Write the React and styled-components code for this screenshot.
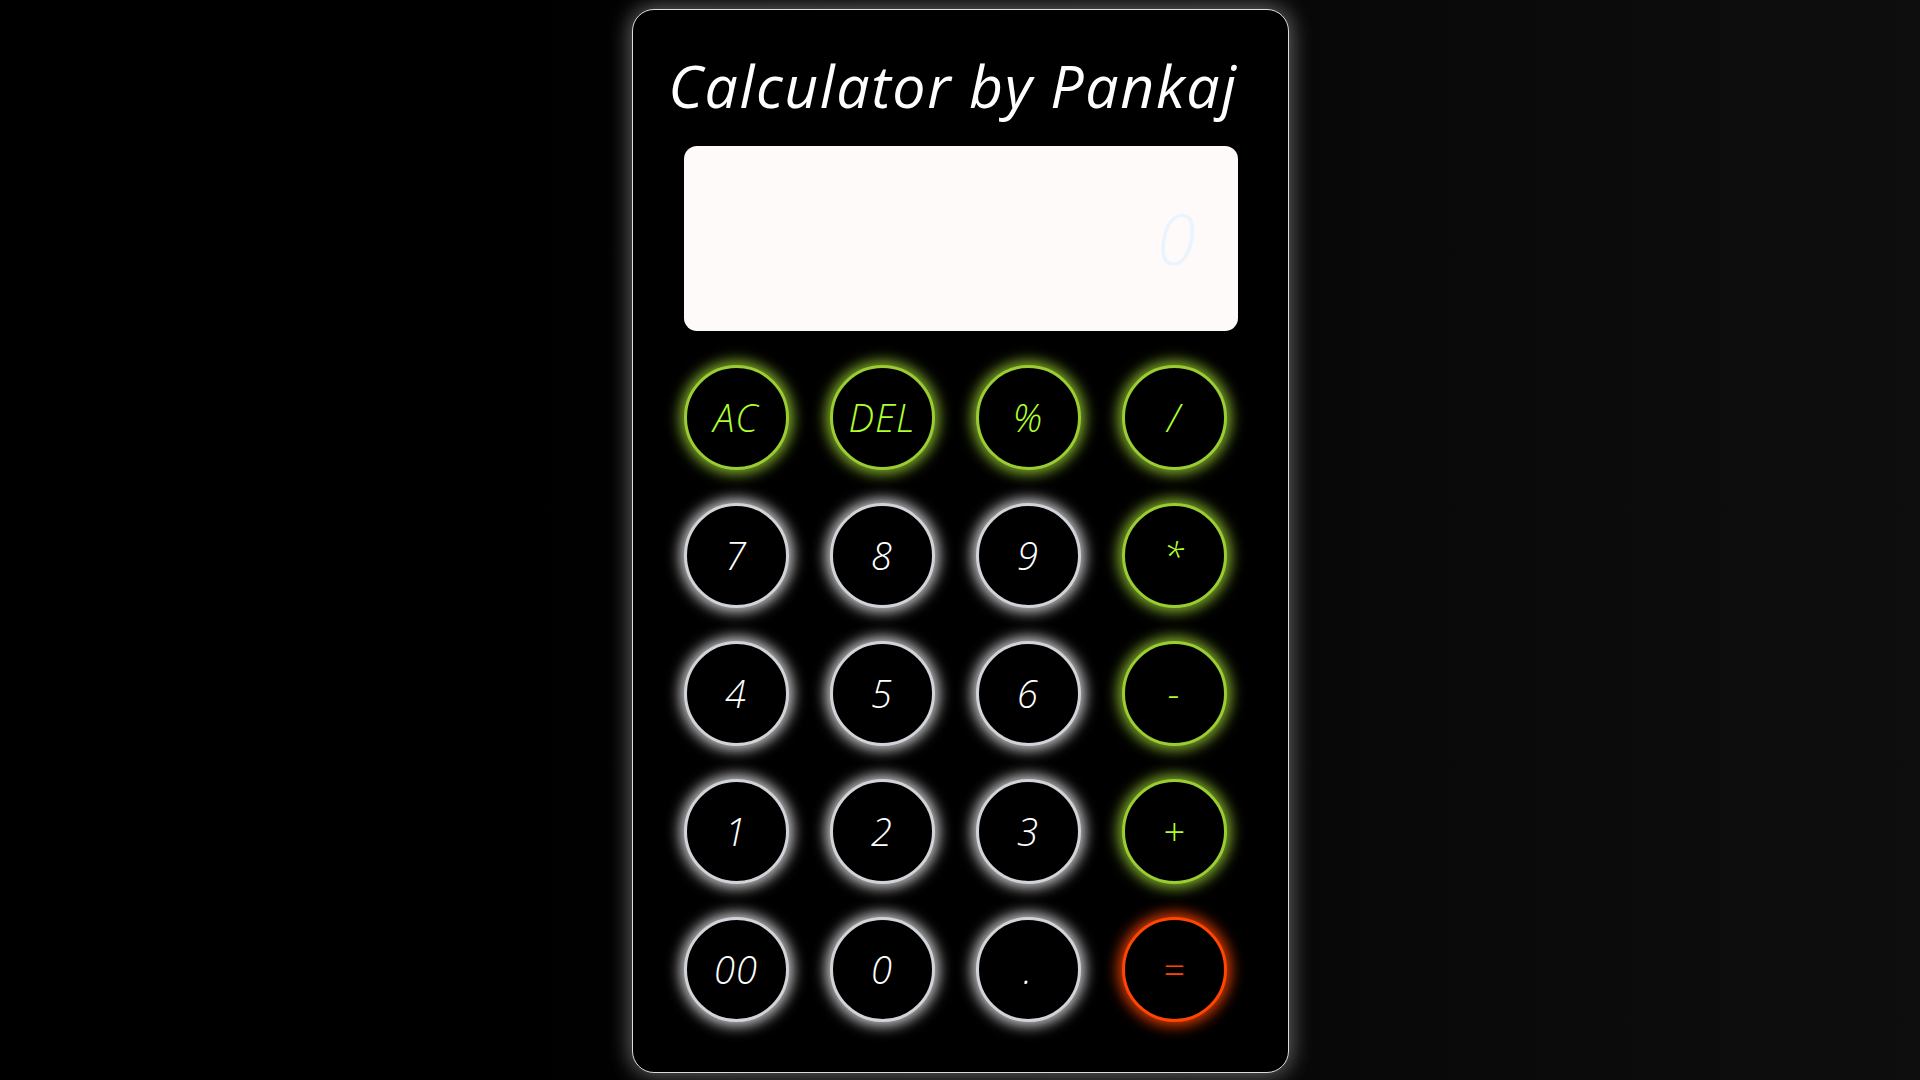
import React from 'react';
import styled, { createGlobalStyle } from 'styled-components';

const GlobalStyle = createGlobalStyle`
  * {
    box-sizing: border-box;
  }

  body {
    margin: 0;
    min-height: 100vh;
    background: linear-gradient(to right, #000 0%, #000 25%, #0e0e0e 100%);
    font-family: "Open Sans", "Liberation Sans", sans-serif;
  }
`;

const keys = [
  { label: 'AC', kind: 'op' },
  { label: 'DEL', kind: 'op' },
  { label: '%', kind: 'op' },
  { label: '/', kind: 'op' },
  { label: '7', kind: 'num' },
  { label: '8', kind: 'num' },
  { label: '9', kind: 'num' },
  { label: '*', kind: 'op' },
  { label: '4', kind: 'num' },
  { label: '5', kind: 'num' },
  { label: '6', kind: 'num' },
  { label: '-', kind: 'op' },
  { label: '1', kind: 'num' },
  { label: '2', kind: 'num' },
  { label: '3', kind: 'num' },
  { label: '+', kind: 'op' },
  { label: '00', kind: 'num' },
  { label: '0', kind: 'num' },
  { label: '.', kind: 'num' },
  { label: '=', kind: 'eq' },
];

const App = () => {
  return (
    <>
      <GlobalStyle />
      <Page>
        <Calculator>
          <Title>Calculator by Pankaj</Title>
          <Display>
            <Value>0</Value>
          </Display>
          <Keypad>
            {keys.map((k) => (
              <Key key={k.label} $kind={k.kind}>
                {k.label}
              </Key>
            ))}
          </Keypad>
        </Calculator>
      </Page>
    </>
  );
};

export default App;

const Page = styled.div`
  display: flex;
  justify-content: center;
  padding-top: 9px;
`;

const Calculator = styled.div`
  width: 657px;
  height: 1064px;
  padding: 0 50px 0 51px;
  display: flex;
  flex-direction: column;
  background-color: #000;
  border: 1.5px solid #dcdcdc;
  border-radius: 22px;
  box-shadow: 0 0 22px 2px rgba(255, 255, 255, 0.4);
`;

const Title = styled.h1`
  margin: 40px -50px 0;
  padding-right: 15px;
  font-size: 59px;
  font-weight: 500;
  font-style: italic;
  line-height: 1.2;
  color: #fff;
  text-align: center;
  white-space: nowrap;
  letter-spacing: 1.6px;
`;

const Display = styled.div`
  margin-top: 25px;
  height: 185px;
  display: flex;
  align-items: center;
  justify-content: flex-end;
  padding-right: 42px;
  background-color: #fffafa;
  border-radius: 13px;
`;

const Value = styled.span`
  font-size: 70px;
  font-weight: 300;
  font-style: italic;
  color: #eaf4fd;
`;

const colors = {
  op: { border: '#9acd32', glow: 'rgba(154, 205, 50, 0.85)', text: '#adff2f' },
  num: { border: '#d0d4d8', glow: 'rgba(255, 255, 255, 0.8)', text: '#fff' },
  eq: { border: '#ff4500', glow: 'rgba(255, 69, 0, 0.85)', text: '#ff4500' },
};

const Keypad = styled.div`
  margin-top: 34px;
  display: grid;
  grid-template-columns: repeat(4, 105px);
  column-gap: 41px;
  row-gap: 33px;
`;

const Key = styled.button`
  width: 105px;
  height: 105px;
  padding: 0;
  border-radius: 50%;
  background-color: #000;
  border: 3px solid ${(p) => colors[p.$kind].border};
  box-shadow: 0 0 14px 4px ${(p) => colors[p.$kind].glow};
  color: ${(p) => colors[p.$kind].text};
  font-family: "Open Sans", "Liberation Sans", sans-serif;
  font-size: 38px;
  font-weight: 300;
  font-style: italic;
  letter-spacing: 1px;
  cursor: pointer;
  display: flex;
  align-items: center;
  justify-content: center;
`;
